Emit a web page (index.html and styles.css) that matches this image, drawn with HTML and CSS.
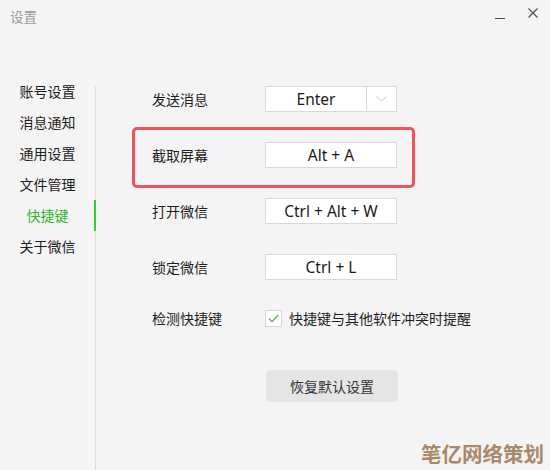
FILE: index.html
```html
<!DOCTYPE html>
<html lang="zh">
<head>
<meta charset="utf-8">
<title>设置</title>
<link rel="stylesheet" href="styles.css">
</head>
<body>
<div class="window">
  <header class="titlebar">
    <span class="title">设置</span>
    <div class="controls">
      <span class="ctl ctl-min"><svg width="10" height="10" viewBox="0 0 10 10"><line x1="0" y1="4.5" x2="10" y2="4.5" stroke="#4a4a4a" stroke-width="1"/></svg></span>
      <span class="ctl ctl-close"><svg width="10" height="10" viewBox="0 0 10 10"><path d="M0.5 0.5 L9.5 9.5 M9.5 0.5 L0.5 9.5" stroke="#4a4a4a" stroke-width="1.1" fill="none"/></svg></span>
    </div>
  </header>
  <div class="main">
    <aside class="sidebar">
      <ul class="nav">
        <li class="nav-item">账号设置</li>
        <li class="nav-item">消息通知</li>
        <li class="nav-item">通用设置</li>
        <li class="nav-item">文件管理</li>
        <li class="nav-item active">快捷键</li>
        <li class="nav-item">关于微信</li>
      </ul>
    </aside>
    <section class="content">
      <div class="row">
        <span class="label">发送消息</span>
        <div class="keybox split">
          <span class="key">Enter</span>
          <span class="drop"><svg width="11" height="6" viewBox="0 0 11 6"><path d="M0.5 0.5 L5.5 5 L10.5 0.5" stroke="#c8c8c8" stroke-width="1" fill="none"/></svg></span>
        </div>
      </div>
      <div class="row highlight">
        <span class="label">截取屏幕</span>
        <div class="keybox"><span class="key">Alt + A</span></div>
      </div>
      <div class="row">
        <span class="label">打开微信</span>
        <div class="keybox"><span class="key">Ctrl + Alt + W</span></div>
      </div>
      <div class="row">
        <span class="label">锁定微信</span>
        <div class="keybox"><span class="key">Ctrl + L</span></div>
      </div>
      <div class="row row-check">
        <span class="label">检测快捷键</span>
        <label class="check">
          <span class="box"><svg width="11" height="9" viewBox="0 0 11 9"><path d="M0.8 4.5 L4 7.6 L10.2 1" stroke="#3fbf3f" stroke-width="1.2" fill="none"/></svg></span>
          <span class="check-text">快捷键与其他软件冲突时提醒</span>
        </label>
      </div>
      <div class="actions">
        <button class="btn">恢复默认设置</button>
      </div>
    </section>
  </div>
  <div class="watermark">笔亿网络策划</div>
</div>
</body>
</html>
```

FILE: styles.css
```css
* { box-sizing: border-box; margin: 0; padding: 0; }
html, body { width: 550px; height: 470px; overflow: hidden; }
body {
  background: #f4f4f4;
  font-family: "Noto Sans CJK SC", "Noto Sans", sans-serif;
  color: #1e1e1e;
}
.window {
  position: relative;
  width: 550px;
  height: 470px;
  background: #f4f4f4;
}
.titlebar {
  height: 40px;
  display: flex;
  justify-content: space-between;
  align-items: flex-start;
  padding: 6px 0 0 10px;
}
.title {
  font-size: 13.5px;
  line-height: 20px;
  color: #9a9a9a;
}
.controls {
  display: flex;
  align-items: flex-start;
  padding-top: 2px;
}
.ctl {
  display: flex;
  width: 10px;
  height: 10px;
}
.ctl-min { margin-right: 23px; margin-top: 6px; }
.ctl-close { margin-right: 12px; margin-top: 0; }

.main {
  display: grid;
  grid-template-columns: 96px 1fr;
  height: 430px;
}
.sidebar {
  margin-top: 46px;
  border-right: 1px solid #e0e0e0;
}
.nav {
  list-style: none;
  margin-top: -10px;
}
.nav-item {
  position: relative;
  height: 31px;
  line-height: 31px;
  text-align: center;
  font-size: 14px;
  color: #1e1e1e;
}
.nav-item.active { color: #2fb52f; }
.nav-item.active::after {
  content: "";
  position: absolute;
  right: -1px;
  top: 0;
  width: 2px;
  height: 31px;
  background: #3cc83c;
}

.content {
  padding-top: 31px;
  padding-left: 36px;
}
.row {
  position: relative;
  width: 283px;
  height: 56px;
  display: flex;
  align-items: center;
  padding-left: 20px;
}
.row.highlight::before {
  content: "";
  position: absolute;
  left: 0;
  right: 0;
  top: 0;
  bottom: -5px;
  border: 3px solid #f3505f;
  border-radius: 5px;
}
.label {
  flex: 0 0 113px;
  font-size: 14px;
  color: #1e1e1e;
  white-space: nowrap;
}
.keybox {
  display: flex;
  flex: 0 0 132px;
  height: 26px;
  background: #ffffff;
  border: 1px solid #d9d9d9;
  align-items: center;
}
.key {
  flex: 1;
  text-align: center;
  font-family: "Noto Sans", "Open Sans", sans-serif;
  font-size: 15.5px;
  line-height: 24px;
  color: #1a1a1a;
}
.drop {
  width: 30px;
  height: 24px;
  border-left: 1px solid #d9d9d9;
  display: flex;
  align-items: center;
  justify-content: center;
}
.row-check { height: 46px; width: auto; }
.check {
  display: flex;
  align-items: center;
  white-space: nowrap;
}
.box {
  flex: 0 0 17px;
  width: 17px;
  height: 17px;
  background: #fff;
  border: 1px solid #d6d6d6;
  display: flex;
  align-items: center;
  justify-content: center;
  margin-right: 7px;
}
.check-text { font-size: 14px; color: #1e1e1e; }
.actions {
  padding-left: 134px;
  margin-top: 29px;
}
.btn {
  width: 132px;
  height: 32px;
  border: none;
  border-radius: 4px;
  background: #e5e5e5;
  font-family: "Noto Sans CJK SC", sans-serif;
  font-size: 14px;
  color: #333;
}
.watermark {
  position: absolute;
  right: 6px;
  bottom: 4px;
  font-family: "Noto Sans CJK SC", sans-serif;
  font-weight: 700;
  font-size: 20.5px;
  line-height: 26px;
  color: #a9896a;
}
```
